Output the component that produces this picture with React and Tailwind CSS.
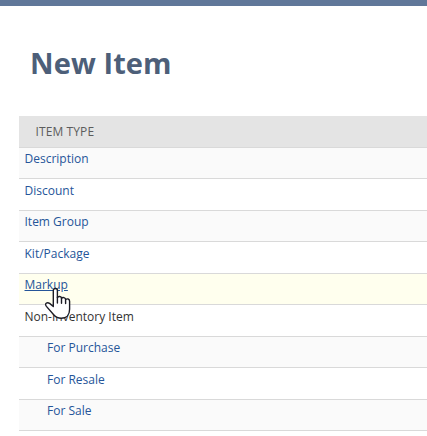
const rows = [
  { label: "Description", height: "h-[31px] pt-[3px]", bg: "bg-[#fafafa]" },
  { label: "Discount", height: "h-8 pt-1", bg: "bg-white" },
  { label: "Item Group", height: "h-[31px] pt-[3px]", bg: "bg-[#fafafa]" },
  { label: "Kit/Package", height: "h-8 pt-1", bg: "bg-white" },
  { label: "Markup", height: "h-[31px] pt-[3px]", bg: "bg-[#ffffee]", hovered: true },
  { label: "Non-Inventory Item", height: "h-8 pt-1", bg: "bg-white", plain: true },
  { label: "For Purchase", height: "h-[31px] pt-[3px]", bg: "bg-[#fafafa]", nested: true },
  { label: "For Resale", height: "h-8 pt-1", bg: "bg-white", nested: true },
  { label: "For Sale", height: "h-[31px] pt-[3px]", bg: "bg-[#fafafa]", nested: true },
];

function HandCursor() {
  return (
    <svg
      className="pointer-events-none absolute top-3 left-[25px] z-10"
      width="28"
      height="35"
      viewBox="0 0 28 35"
      fill="white"
      stroke="#1c1c24"
      strokeWidth="1.4"
      strokeLinejoin="round"
      strokeLinecap="round"
      aria-hidden="true"
    >
      <path d="M9.3 20.5V4.4C9.3 1.9 13.4 1.9 13.4 4.4V11.6C14.2 9.9 17.5 10.2 17.5 12.3C18.6 10.9 21.6 11.3 21.6 13.6C22.9 12.3 25.6 12.7 25.6 15.2V23.2C25.6 29.2 22 32.3 17.2 32.3C13.8 32.3 11.9 31.3 9.7 28.8L2.4 20.4C.2 17.7 3 15.9 5.6 17.4Z" />
      <path d="M13.4 11.3V17M17.5 12.3V17.3M21.6 13.6V17.6" fill="none" />
    </svg>
  );
}

function Row({ label, height, bg, hovered, plain, nested }) {
  return (
    <div
      className={`relative border-b border-[#d9d9d9] text-[12px] leading-4 ${height} ${bg} ${nested ? "pl-7" : "pl-[5.5px]"}`}
    >
      {plain ? (
        <span className="text-[#333333]">{label}</span>
      ) : (
        <a className={`text-[#255599] ${hovered ? "underline" : ""}`}>{label}</a>
      )}
      {hovered && <HandCursor />}
    </div>
  );
}

export default function App() {
  return (
    <main className="h-[436px] w-[427px] overflow-hidden border-t-[6px] border-[#607799] bg-white font-['Open_Sans',sans-serif]">
      <h1 className="h-[110px] pt-[37px] pl-[30px] text-[29px] leading-10 font-bold tracking-[0.1px] text-[#4d5f79]">
        New Item
      </h1>
      <section className="ml-[19px]">
        <header className="h-8 border-b border-[#d9d9d9] bg-[#e4e4e4] pt-2 pl-[16.5px] text-[12px] leading-4 tracking-[0.1px] text-[#5c5c5c]">
          ITEM TYPE
        </header>
        {rows.map((row) => (
          <Row key={row.label} {...row} />
        ))}
      </section>
    </main>
  );
}
